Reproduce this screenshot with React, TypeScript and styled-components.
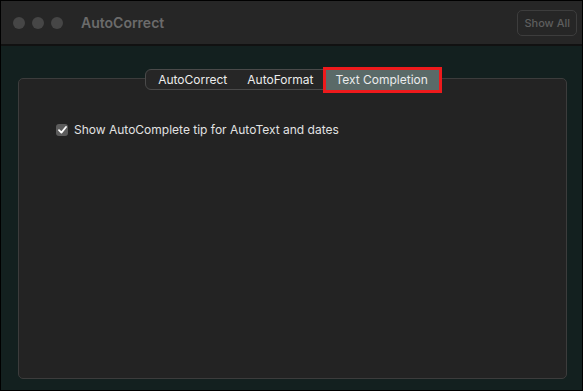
import React from "react";
import styled, { createGlobalStyle } from "styled-components";

const GlobalStyle = createGlobalStyle`
  html, body {
    margin: 0;
    padding: 0;
    background: #000;
  }
  * {
    box-sizing: border-box;
  }
`;

const Window = styled.div`
  width: 583px;
  height: 391px;
  border: 1px solid #000;
  display: flex;
  flex-direction: column;
  font-family: Inter, "Liberation Sans", sans-serif;
  background: #13201f;
`;

const TitleBar = styled.div`
  height: 45px;
  flex: none;
  display: flex;
  align-items: center;
  padding: 0 5px 0 12px;
  background: #262626;
  border-bottom: 2px solid #111;
`;

const Lights = styled.div`
  display: flex;
  gap: 7px;
`;

const Light = styled.span`
  width: 12px;
  height: 12px;
  border-radius: 50%;
  background: #464646;
`;

const Title = styled.div`
  margin-left: 18px;
  font-size: 14px;
  font-weight: 600;
  color: #6b6b6b;
  flex: 1;
`;

const ShowAll = styled.button`
  height: 26px;
  padding: 0 6px;
  border: 1px solid #3d3d3d;
  border-radius: 5px;
  background: transparent;
  color: #5e5e5e;
  font-family: inherit;
  font-size: 11px;
  font-weight: 500;
`;

const Body = styled.div`
  flex: 1;
  padding: 32px 15px 11px 17px;
  display: flex;
`;

const Panel = styled.div`
  flex: 1;
  background: #232323;
  border: 1px solid #3c3c3c;
  border-radius: 5px;
  display: flex;
  flex-direction: column;
`;

const Segmented = styled.div`
  align-self: center;
  margin-top: -10px;
  display: flex;
  align-items: center;
  height: 21px;
  background: #262626;
  border: 1px solid #4a4a4a;
  border-radius: 6px;
  padding-left: 2px;
`;

const Tab = styled.div<{ $active?: boolean }>`
  height: ${(p) => (p.$active ? "22px" : "auto")};
  display: flex;
  align-items: center;
  padding: ${(p) => (p.$active ? "0 12px 0 10px" : "0 10px")};
  font-size: 12px;
  font-weight: 400;
  color: #ececec;
  background: ${(p) => (p.$active ? "#5a6a68" : "transparent")};
  outline: ${(p) => (p.$active ? "3px solid #ee1a1c" : "none")};
  outline-offset: -1px;
  margin-left: ${(p) => (p.$active ? "2px" : "0")};
  margin-right: ${(p) => (p.$active ? "-1px" : "0")};
`;

const Content = styled.div`
  padding: 32px 0 0 37px;
`;

const CheckRow = styled.label`
  display: flex;
  align-items: center;
  gap: 6px;
  font-size: 12px;
  color: #e2e2e2;
`;

const Box = styled.span`
  width: 12px;
  height: 12px;
  border-radius: 3px;
  background: #5c5c5c;
  display: flex;
  align-items: center;
  justify-content: center;
`;

export default function App() {
  return (
    <>
      <GlobalStyle />
      <Window>
        <TitleBar>
          <Lights>
            <Light />
            <Light />
            <Light />
          </Lights>
          <Title>AutoCorrect</Title>
          <ShowAll>Show All</ShowAll>
        </TitleBar>
        <Body>
          <Panel>
            <Segmented>
              <Tab>AutoCorrect</Tab>
              <Tab>AutoFormat</Tab>
              <Tab $active>Text Completion</Tab>
            </Segmented>
            <Content>
              <CheckRow>
                <Box>
                  <svg width="9" height="8" viewBox="0 0 9 8">
                    <path d="M1 4.2 L3.4 6.6 L8 1" fill="none" stroke="#fff" strokeWidth="1.8" strokeLinecap="round" strokeLinejoin="round" />
                  </svg>
                </Box>
                Show AutoComplete tip for AutoText and dates
              </CheckRow>
            </Content>
          </Panel>
        </Body>
      </Window>
    </>
  );
}
